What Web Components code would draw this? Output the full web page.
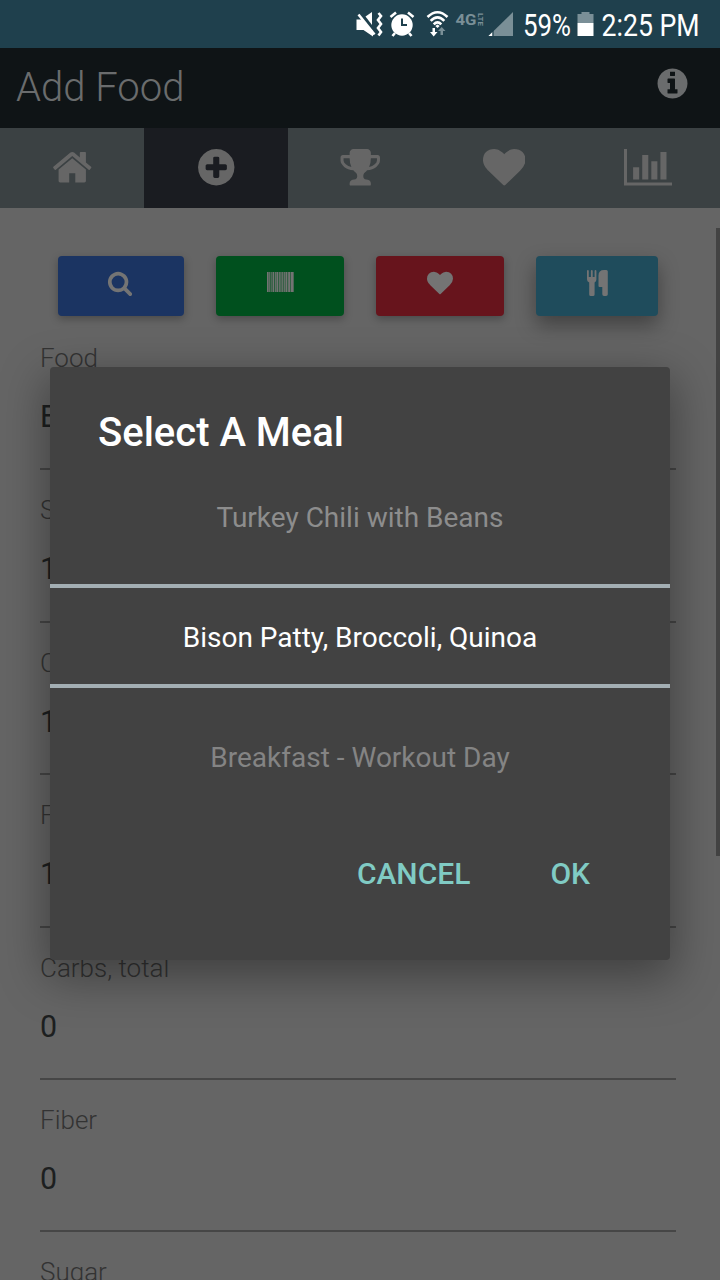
<!DOCTYPE html>
<html lang="en">
<head>
<meta charset="utf-8">
<title>Add Food</title>
<style>
  html, body {
    margin: 0;
    width: 720px;
    height: 1280px;
    overflow: hidden;
    background: #656565;
    font-family: Roboto, "Liberation Sans", sans-serif;
  }
</style>
</head>
<body>
<food-app>
  <status-bar slot="top"></status-bar>
  <nav-bar slot="top">Add Food</nav-bar>
  <tab-bar slot="top" active="plus"></tab-bar>

  <action-button icon="search" slot="actions" style="--bg:#1b3462;--w:126px;--shift:-1px"></action-button>
  <action-button icon="barcode" slot="actions" style="--bg:#00501e;--w:128px"></action-button>
  <action-button icon="heart" slot="actions" style="--bg:#67141c;--w:128px"></action-button>
  <action-button icon="cutlery" slot="actions" raised style="--bg:#1f4c5c;--w:122px"></action-button>

  <form-field label="Food">B</form-field>
  <form-field label="Servings">1</form-field>
  <form-field label="Calories">1</form-field>
  <form-field label="Fat, total">1</form-field>
  <form-field label="Carbs, total">0</form-field>
  <form-field label="Fiber">0</form-field>
  <form-field label="Sugar"></form-field>

  <picker-dialog slot="overlay" heading="Select A Meal">
    <span slot="prev">Turkey Chili with Beans</span>
    <span slot="current">Bison Patty, Broccoli, Quinoa</span>
    <span slot="next">Breakfast - Workout Day</span>
  </picker-dialog>
</food-app>

<script>
  // viewBox and markup for every icon
  const ICONS = {
    home: ['0 0 1792 1792', '<path d="M1472 992v480q0 26-19 45t-45 19h-384v-384h-256v384h-384q-26 0-45-19t-19-45v-480q0-1 .5-3t.5-3l575-474 575 474q1 2 1 6zm223-69l-62 74q-8 9-21 11h-3q-13 0-21-7l-692-577-692 577q-12 8-24 7-13-2-21-11l-62-74q-8-10-7-23.5t11-21.5l719-599q32-26 76-26t76 26l244 204v-195q0-14 9-23t23-9h192q14 0 23 9t9 23v408l219 182q10 8 11 21.5t-7 23.5z"/>'],
    plus: ['0 0 1792 1792', '<path d="M1344 960v-128q0-26-19-45t-45-19h-256v-256q0-26-19-45t-45-19h-128q-26 0-45 19t-19 45v256h-256q-26 0-45 19t-19 45v128q0 26 19 45t45 19h256v256q0 26 19 45t45 19h128q26 0 45-19t19-45v-256h256q26 0 45-19t19-45zm320-64q0 209-103 385.5t-279.5 279.5-385.5 103-385.5-103-279.5-279.5-103-385.5 103-385.5 279.5-279.5 385.5-103 385.5 103 279.5 279.5 103 385.5z"/>'],
    info: ['0 0 1792 1792', '<path d="M1152 1376v-160q0-14-9-23t-23-9h-96v-512q0-14-9-23t-23-9h-320q-14 0-23 9t-9 23v160q0 14 9 23t23 9h96v320h-96q-14 0-23 9t-9 23v160q0 14 9 23t23 9h448q14 0 23-9t9-23zm-128-896v-160q0-14-9-23t-23-9h-192q-14 0-23 9t-9 23v160q0 14 9 23t23 9h192q14 0 23-9t9-23zm640 416q0 209-103 385.5t-279.5 279.5-385.5 103-385.5-103-279.5-279.5-103-385.5 103-385.5 279.5-279.5 385.5-103 385.5 103 279.5 279.5 103 385.5z"/>'],
    trophy: ['0 0 1792 1792', '<path d="M522 883q-74-162-74-371h-256v96q0 78 94.5 162t235.5 113zm1078-275v-96h-256q0 209-74 371 141-29 235.5-113t94.5-162zm128-128v128q0 71-41.5 143t-112 130-173 97.5-215.5 44.5q-42 54-95 95-38 34-52.5 72.5t-14.5 89.5q0 54 30.5 91t97.5 37q75 0 133.5 45.5t58.5 114.5v64q0 14-9 23t-23 9h-832q-14 0-23-9t-9-23v-64q0-69 58.5-114.5t133.5-45.5q67 0 97.5-37t30.5-91q0-51-14.5-89.5t-52.5-72.5q-53-41-95-95-113-5-215.5-44.5t-173-97.5-112-130-41.5-143v-128q0-40 28-68t68-28h288v-96q0-66 47-113t113-47h576q66 0 113 47t47 113v96h288q40 0 68 28t28 68z"/>'],
    heart: ['0 0 1792 1792', '<path d="M896 1664q-26 0-44-18l-624-602q-10-8-27.5-26t-55.5-65.5-68-97.5-53.5-121-23.5-138q0-220 127-344t351-124q62 0 126.5 21.5t120 58 95.5 68.5 76 68q36-36 76-68t95.5-68.5 120-58 126.5-21.5q224 0 351 124t127 344q0 221-229 450l-623 600q-18 18-44 18z"/>'],
    search: ['0 0 1792 1792', '<path d="M1216 832q0-185-131.5-316.5t-316.5-131.5-316.5 131.5-131.5 316.5 131.5 316.5 316.5 131.5 316.5-131.5 131.5-316.5zm512 832q0 52-38 90t-90 38q-54 0-90-38l-343-342q-179 124-399 124-143 0-273.5-55.5t-225-150-150-225-55.5-273.5 55.5-273.5 150-225 225-150 273.5-55.5 273.5 55.5 225 150 150 225 55.5 273.5q0 220-124 399l343 343q37 37 37 90z"/>'],
    chart: ['0 0 2048 1792', '<path d="M640 896v512h-256v-512h256zm384-512v1024h-256v-1024h256zm1024 1152v128h-2048v-1536h128v1408h1920zm-640-896v768h-256v-768h256zm384-384v1152h-256v-1152h256z"/>'],
    barcode: ['0 0 27 26', '<path d="M0 2h1.500v20H0zM2.300 2h.8v20h-.8zM4.500 2h.8v20h-.8zM6 2h1v20H6zM8 2h.8v20H8zM9.500 2h1.600v20H9.500zM12 2h.8v20h-.8zM13.500 2h.9v20h-.9zM15.200 2h1v20h-1zM17 2h.8v20H17zM18.600 2h1.600v20h-1.600zM21.200 2h2v20h-2zM24 2h2.600v20H24z"/><path d="M0 2h26.600v20H0z" opacity=".35"/>'],
    cutlery: ['0 0 21 26', '<path d="M0 1Q0 0 .9 0T1.800 1V7H3.900V1Q3.900 0 4.800 0T5.700 1V7H7.600V1Q7.600 0 8.500 0T9.400 1V9.500Q9.400 11.700 7.600 12.600V24.500Q7.600 26 6 26H3.800Q2.200 26 2.200 24.500V12.600Q0 11.700 0 9.500ZM20.800 1.500V24.300Q20.800 26 19.100 26H17Q15.300 26 15.300 24.300V17H12.500Q11.500 17 11.500 16V5.500Q11.500 0 17 0H19.300Q20.800 0 20.800 1.500Z"/>'],
  };

  function icon(name, height) {
    const [box, body] = ICONS[name];
    const [, , w, h] = box.split(' ');
    return `<svg viewBox="${box}" width="${(height * w) / h}" height="${height}" fill="currentColor">${body}</svg>`;
  }

  // Attaches the open root and fills it from a template
  class BaseElement extends HTMLElement {
    connectedCallback() {
      if (this.shadowRoot) return;
      const template = document.createElement('template');
      template.innerHTML = this.render();
      this.attachShadow({ mode: 'open' }).append(template.content.cloneNode(true));
    }
  }

  class StatusBar extends BaseElement {
    render() {
      return `
        <style>
          :host { display: block; height: 48px; background: #1f404d; }
          svg { display: block; margin-left: auto; }
          text { font-family: Roboto, sans-serif; }
        </style>
        <svg width="380" height="48" viewBox="340 0 380 48" fill="#fff">
          <!-- muted speaker with vibration marks -->
          <path d="M356.500 19.500h6L373 31v5.500L363.500 30h-7z"/>
          <path d="M358.500 14.500L374.500 34.500" stroke="#fff" stroke-width="2.600"/>
          <path d="M365.500 16.500l6.500-4.500v13z"/>
          <path d="M378.500 13l2.500 3-3 4 3 4-3 4 3 4-2.500 3.500" fill="none" stroke="#fff" stroke-width="2.600"/>
          <!-- alarm clock -->
          <circle cx="402" cy="25" r="10.700"/>
          <path d="M390.500 17l5.500-4.500M413.500 17l-5.500-4.500M395 33l-2.500 3M409 33l2.500 3" stroke="#fff" stroke-width="2.600"/>
          <path d="M402 18.500v6.500h5" fill="none" stroke="#1f404d" stroke-width="2"/>
          <!-- wifi with traffic arrows -->
          <g fill="none" stroke="#fff" stroke-width="2.600">
            <path d="M427.500 17Q437.500 7.500 447.500 17"/>
            <path d="M430.700 20.800Q437.500 14 444.300 20.800"/>
            <path d="M433.700 24.300Q437.500 20.500 441.300 24.300"/>
          </g>
          <path d="M435.300 26l2.200-1.500 2.200 1.500-2.200 2z"/>
          <path d="M432.500 28h2.500v4h2.500l-3.800 4.500-3.700-4.500h2.500z"/>
          <path d="M440.500 35v-4H438l3.700-4 3.800 4H443v4z" fill="#7a8f97"/>
          <g fill="#7a8f97" font-weight="700">
            <text x="455.500" y="25" font-size="15.500" textLength="21" lengthAdjust="spacingAndGlyphs">4G</text>
            <text transform="translate(478 13) rotate(90)" font-size="7" textLength="13" lengthAdjust="spacingAndGlyphs">LTE</text>
          </g>
          <!-- signal -->
          <path d="M513 12v24h-24.500z" fill="#7a8f97"/>
          <path d="M488.500 36l4-4v4z"/>
          <path d="M493 30v6" stroke="#1f404d" stroke-width="1.200"/>
          <text x="523" y="36" font-size="31" textLength="48" lengthAdjust="spacingAndGlyphs">59%</text>
          <!-- battery -->
          <path d="M577.500 23v-9h4v-2h8v2h4v9z" fill="#7a8f97"/>
          <path d="M577.500 23h16v13h-16z"/>
          <text x="601.500" y="36" font-size="31" textLength="98" lengthAdjust="spacingAndGlyphs">2:25 PM</text>
        </svg>
      `;
    }
  }

  class NavBar extends BaseElement {
    render() {
      return `
        <style>
          :host {
            display: flex;
            align-items: center;
            justify-content: space-between;
            box-sizing: border-box;
            height: 80px;
            padding: 0 30px 0 16px;
            background: #0f1416;
            color: #6a6c6d;
            font-size: 40px;
            font-weight: 300;
            line-height: 76px;
          }
          span { padding-bottom: 1px; }
          svg { display: block; margin-bottom: 9px; }
        </style>
        <span><slot></slot></span>
        ${icon('info', 35)}
      `;
    }
  }

  class TabBar extends BaseElement {
    render() {
      const tabs = ['home', 'plus', 'trophy', 'heart', 'chart'];
      const active = this.getAttribute('active');
      return `
        <style>
          :host { display: grid; grid-template-columns: repeat(5, 1fr); height: 80px; background: #3b4143; color: #666; }
          div { display: flex; align-items: center; justify-content: center; padding-bottom: 2px; }
          .active { background: #1a1c21; }
        </style>
        ${tabs.map((tab) => `<div class="${tab === active ? 'active' : ''}">${icon(tab, 42.5)}</div>`).join('')}
      `;
    }
  }

  class ActionButton extends BaseElement {
    render() {
      return `
        <style>
          :host {
            display: flex;
            justify-content: center;
            box-sizing: border-box;
            width: var(--w);
            height: 60px;
            padding-top: 14px;
            border-radius: 4px;
            background: var(--bg);
            color: #747474;
            box-shadow: 0 3px 8px rgba(0, 0, 0, 0.28);
          }
          :host([raised]) { box-shadow: 0 9px 20px rgba(0, 0, 0, 0.36); }
          svg { margin-left: calc(var(--shift, 0px) * 2); }
        </style>
        ${icon(this.getAttribute('icon'), 26)}
      `;
    }
  }

  class FormField extends BaseElement {
    render() {
      return `
        <style>
          :host {
            display: flex;
            flex-direction: column;
            flex: none;
            box-sizing: border-box;
            height: 152.400px;
            padding-top: 23px;
            border-bottom: 2px solid #464646;
            white-space: nowrap;
          }
          label { color: #333; font-size: 26px; font-weight: 300; line-height: 34px; }
          .value { margin-top: 21px; color: #1d1f20; font-size: 32px; line-height: 40px; }
          .value span { display: inline-block; transform: scaleX(.95); transform-origin: 0 50%; }
        </style>
        <label>${this.getAttribute('label')}</label>
        <div class="value"><span><slot></slot></span></div>
      `;
    }
  }

  class PickerDialog extends BaseElement {
    render() {
      return `
        <style>
          :host {
            display: flex;
            flex-direction: column;
            box-sizing: border-box;
            width: 620px;
            height: 593px;
            border-radius: 4px;
            background: #424242;
            box-shadow: 0 14px 46px 4px rgba(0, 0, 0, 0.36);
            text-align: center;
          }
          h2 { margin: 42px 48px 0; color: #fff; font-size: 40px; font-weight: 500; line-height: 48px; text-align: left; }
          .item { font-size: 28px; line-height: 40px; color: #8d8d8d; }
          .prev { margin-top: 41px; }
          .current {
            margin-top: 46px;
            padding: 30px 0 26px;
            border: solid #a3aeb3;
            border-width: 4px 0;
            color: #fff;
          }
          .next { margin-top: 50px; color: #848484; }
          .buttons {
            display: flex;
            justify-content: flex-end;
            gap: 80px;
            margin-top: 76px;
            padding-right: 80px;
            color: #80cbc4;
            font-size: 30px;
            font-weight: 500;
            line-height: 40px;
          }
        </style>
        <h2>${this.getAttribute('heading')}</h2>
        <div class="item prev"><slot name="prev"></slot></div>
        <div class="item current"><slot name="current"></slot></div>
        <div class="item next"><slot name="next"></slot></div>
        <div class="buttons"><span>CANCEL</span><span>OK</span></div>
      `;
    }
  }

  class FoodApp extends BaseElement {
    render() {
      return `
        <style>
          :host { display: block; position: relative; width: 720px; height: 1280px; overflow: hidden; background: #656565; }
          .actions { display: flex; gap: 32px; padding: 48px 0 0 58px; }
          .fields { display: flex; flex-direction: column; width: 636px; padding: 2px 0 0 40px; }
          .scroll { position: absolute; right: 0; top: 228px; width: 4px; height: 628px; background: #434343; }
          .overlay { position: absolute; left: 50px; top: 367px; }
        </style>
        <slot name="top"></slot>
        <div class="actions"><slot name="actions"></slot></div>
        <div class="fields"><slot></slot></div>
        <div class="scroll"></div>
        <div class="overlay"><slot name="overlay"></slot></div>
      `;
    }
  }

  customElements.define('status-bar', StatusBar);
  customElements.define('nav-bar', NavBar);
  customElements.define('tab-bar', TabBar);
  customElements.define('action-button', ActionButton);
  customElements.define('form-field', FormField);
  customElements.define('picker-dialog', PickerDialog);
  customElements.define('food-app', FoodApp);
</script>
</body>
</html>
